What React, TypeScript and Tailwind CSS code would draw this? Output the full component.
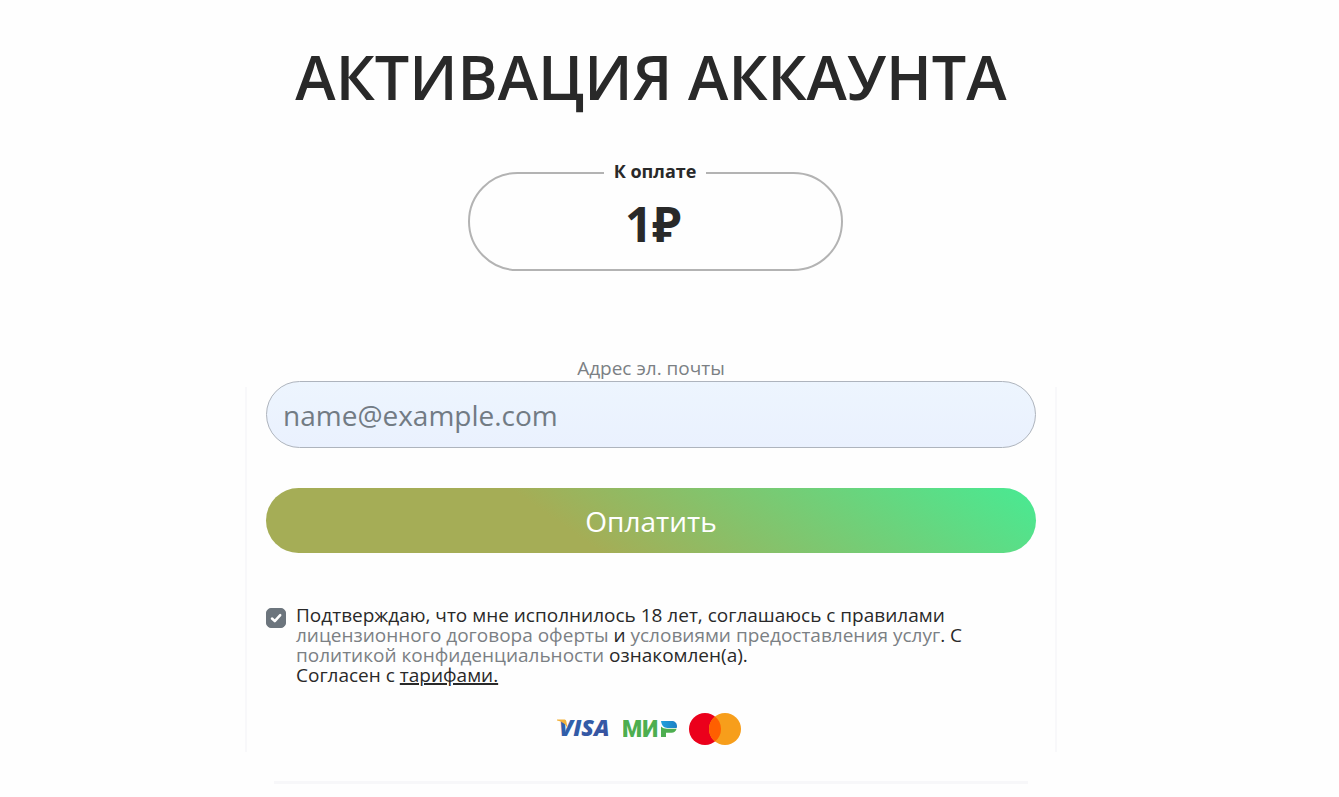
import { FC, FormEvent, useCallback, useState } from 'react';

interface PolicyLinkProps {
  title: string;
  href: string;
}

const PolicyLink: FC<PolicyLinkProps> = ({ title, href }) => (
  <a href={href} className="text-[#7b8084]">
    {title}
  </a>
);

const VisaLogo: FC = () => (
  <svg width="54" height="32" viewBox="0 0 54 32" role="img" aria-label="Visa">
    <defs>
      <linearGradient id="visaFill" x1="0" y1="0" x2="1" y2="1">
        <stop offset="0" stopColor="#2a67b2" />
        <stop offset="1" stopColor="#3b4f9c" />
      </linearGradient>
    </defs>
    <text
      x="2"
      y="23"
      fontFamily="'Open Sans', sans-serif"
      fontSize="23"
      fontWeight="800"
      fontStyle="italic"
      fill="url(#visaFill)"
    >
      VISA
    </text>
    <path d="M0 6.500h7c1.400 0 2 .5 2.300 1.700L10.500 15C8.700 11.500 5.500 8.500 0 7.500Z" fill="#f2b13c" />
  </svg>
);

const MirLogo: FC = () => (
  <svg width="54" height="32" viewBox="0 0 54 32" role="img" aria-label="Мир">
    <defs>
      <linearGradient id="mirFill" x1="0" y1="0" x2="1" y2="0">
        <stop offset="0" stopColor="#1fa0dc" />
        <stop offset="1" stopColor="#1c7fc4" />
      </linearGradient>
    </defs>
    <text x="-1" y="24" fontFamily="Roboto, sans-serif" fontSize="23" fontWeight="900" fill="#4dae50">
      МИ
    </text>
    <path d="M38 13.500c1.500 1.600 3.500 2.200 6 2.200h9.600c-.8 2.800-2.600 4-5 4H43V24h-5Z" fill="#4dae50" />
    <path d="M38 8h10.800c3 0 5.200 2 5.200 5 0 .7-.1 1.300-.3 1.900h-9.300c-3.400 0-5.800-2.400-6.400-6.900Z" fill="url(#mirFill)" />
  </svg>
);

const MastercardLogo: FC = () => (
  <svg width="52" height="32" viewBox="0 0 52 32" role="img" aria-label="Mastercard">
    <circle cx="16" cy="16" r="16" fill="#eb001b" />
    <circle cx="36" cy="16" r="16" fill="#f79e1b" />
    <path d="M26 3.500a16 16 0 0 1 0 25a16 16 0 0 1 0-25Z" fill="#ff5f00" />
  </svg>
);

const App: FC = () => {
  const [email, setEmail] = useState('');
  const [isAccepted, setIsAccepted] = useState(true);

  const onSubmit = useCallback((e: FormEvent) => {
    e.preventDefault();
  }, []);

  return (
    <main className="min-h-screen bg-[#fefefe] pt-8 pr-[37px] font-['Open_Sans','Noto_Sans',sans-serif] text-[#292929]">
      <h1 className="text-center text-[61px] leading-[89px] font-semibold">АКТИВАЦИЯ АККАУНТА</h1>

      <fieldset className="relative left-1 mx-auto mt-9 h-[114px] w-full max-w-[375px] rounded-[50px] border-2 border-[#b3b3b3] text-center">
        <legend className="mx-auto px-2.5 pb-1 text-lg leading-7 font-bold">К оплате</legend>
        <p className="pr-1 text-5xl leading-[70px] font-bold">1₽</p>
      </fieldset>

      <form
        onSubmit={onSubmit}
        className="relative mx-auto mt-21 w-full max-w-[810px] px-5 before:pointer-events-none before:absolute before:-inset-x-px before:top-8 before:bottom-8 before:border-x-2 before:border-[#f8f8fa]"
      >
        <label htmlFor="email" className="block text-center text-[19px] leading-[26px] text-[#7b8084]">
          Адрес эл. почты
        </label>
        <input
          id="email"
          type="email"
          value={email}
          placeholder="name@example.com"
          onChange={(e) => setEmail(e.target.value)}
          className="relative block h-[67px] w-full rounded-full border border-[#aeb4bd] bg-linear-to-b from-[#edf5fe] to-[#eaf1fe] px-4 text-[28px] placeholder:text-[#727b84]"
        />
        <button
          type="submit"
          className="relative mt-10 block h-[65px] w-full rounded-full bg-[linear-gradient(35deg,#a5ad56_39%,#48ea93)] text-[28px] text-white"
        >
          Оплатить
        </button>

        <div className="relative mt-13 flex gap-2.5">
          <span className="relative mt-[3px] size-5 shrink-0">
            <input
              id="terms"
              type="checkbox"
              checked={isAccepted}
              onChange={(e) => setIsAccepted(e.target.checked)}
              className="peer block size-5 appearance-none rounded-[5px] border border-[#6c757d] checked:bg-[#6c757d]"
            />
            <svg
              viewBox="0 0 20 20"
              className="pointer-events-none absolute inset-0 hidden size-5 fill-none stroke-white stroke-[2.5] peer-checked:block"
            >
              <path d="m6 10.500 2.800 2.700 5.400-6" strokeLinecap="round" strokeLinejoin="round" />
            </svg>
          </span>
          <label htmlFor="terms" className="text-[19px] leading-5">
            Подтверждаю, что мне исполнилось 18 лет, соглашаюсь с правилами
            <br />
            <PolicyLink title="лицензионного договора оферты" href="#offer" /> и{' '}
            <PolicyLink title="условиями предоставления услуг" href="#terms" />. С
            <br />
            <PolicyLink title="политикой конфиденциальности" href="#privacy" /> ознакомлен(а).
            <br />
            Согласен с{' '}
            <a href="#tariffs" className="underline decoration-2">
              тарифами.
            </a>
          </label>
        </div>

        <div className="flex items-center justify-center gap-3 pt-7 pr-1 pb-9">
          <VisaLogo />
          <MirLogo />
          <MastercardLogo />
        </div>
        <hr className="mx-2 border-t-3 border-[#f7f7f9]" />
      </form>
    </main>
  );
};

export default App;
